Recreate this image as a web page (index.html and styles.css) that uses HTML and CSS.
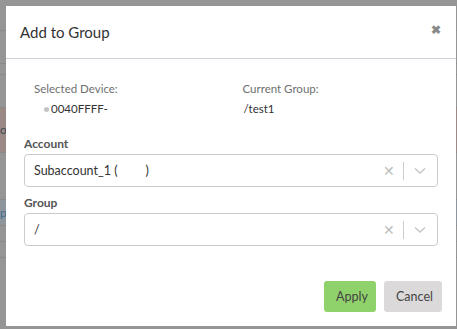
FILE: index.html
```html
<!DOCTYPE html>
<html lang="en">
<head>
    <meta charset="UTF-8">
    <meta name="viewport" content="width=device-width, initial-scale=1.0">
    <title>Add to Group</title>
    <link rel="stylesheet" href="styles.css">
</head>
<body>
    <div class="page">
        <div class="page-row r1"></div>
        <div class="page-row r2"></div>
        <div class="page-row r3"></div>
        <div class="page-row r4"></div>
        <div class="page-row r5 selected">o</div>
        <div class="page-row r6"></div>
        <div class="page-row r7 link">p</div>
        <div class="page-row r8"></div>
        <div class="page-row r9"></div>
    </div>

    <div class="modal">
        <div class="modal-header">
            <h1>Add to Group</h1>
            <span class="close">&#10006;</span>
        </div>

        <div class="modal-body">
            <div class="info">
                <div class="info-col">
                    <div class="info-label">Selected Device:</div>
                    <div class="info-value device"><span class="dot"></span>0040FFFF-</div>
                </div>
                <div class="info-col">
                    <div class="info-label">Current Group:</div>
                    <div class="info-value">/test1</div>
                </div>
            </div>

            <label class="field-label">Account</label>
            <div class="select">
                <span class="select-value">Subaccount_1 (<span class="redacted"></span>)</span>
                <span class="select-clear">&#10005;</span>
                <span class="select-sep"></span>
                <svg class="select-arrow" width="14" height="8" viewBox="0 0 14 8"><path d="M2 1.5 L7 6 L12 1.5" fill="none" stroke="#c8c8c8" stroke-width="1.6"/></svg>
            </div>

            <label class="field-label">Group</label>
            <div class="select">
                <span class="select-value">/</span>
                <span class="select-clear">&#10005;</span>
                <span class="select-sep"></span>
                <svg class="select-arrow" width="14" height="8" viewBox="0 0 14 8"><path d="M2 1.5 L7 6 L12 1.5" fill="none" stroke="#c8c8c8" stroke-width="1.6"/></svg>
            </div>
        </div>

        <div class="modal-footer">
            <button class="btn apply">Apply</button>
            <button class="btn cancel">Cancel</button>
        </div>
    </div>
</body>
</html>
```

FILE: styles.css
```css
body {
    margin: 0;
    background-color: #959595;
    font-family: 'Lato', 'Open Sans', sans-serif;
    overflow: hidden;
}
.page {
    height: 329px;
}
.page-row {
    border-bottom: 1px solid #8a8a8a;
    color: #3b4a5a;
    font-size: 12px;
    line-height: 20px;
}
.r1 { height: 30px; }
.r2 { height: 32px; }
.r3 { height: 10px; }
.r4 { height: 32px; }
.r5 { height: 44px; }
.r6 { height: 46px; }
.r7 { height: 25px; }
.r8 { height: 15px; }
.r9 { height: 15px; }
.selected {
    background-color: #9b8985;
    line-height: 44px;
}
.link {
    background-color: #8f969b;
    color: #3d6d94;
    line-height: 25px;
}

.modal {
    position: fixed;
    top: 6px;
    left: 6px;
    width: 450px;
    height: 320px;
    background-color: white;
    display: flex;
    flex-direction: column;
}
.modal-header {
    height: 52px;
    border-bottom: 1px solid #d0d0da;
    display: flex;
    align-items: center;
    justify-content: space-between;
    padding: 0 14px;
}
.modal-header h1 {
    margin: 0;
    font-size: 15px;
    font-weight: 400;
    color: #333;
}
.close {
    color: #8a8a8a;
    font-size: 12px;
    font-weight: bold;
    margin-top: -6px;
    margin-right: 1px;
}
.modal-body {
    padding: 20px 18px 0 18px;
}
.info {
    display: flex;
    padding-left: 10px;
    margin-bottom: 18px;
}
.info-col {
    width: 211px;
}
.info-col + .info-col {
    padding-left: 13px;
}
.info-label {
    color: #707070;
    font-size: 11.5px;
    line-height: 20px;
}
.info-value {
    color: #333;
    font-size: 11.5px;
    line-height: 18px;
    margin-top: 1px;
    padding-left: 1px;
}
.device {
    display: flex;
    align-items: center;
    padding-left: 10px;
}
.dot {
    width: 5px;
    height: 5px;
    border-radius: 50%;
    background-color: #c4c4c4;
    margin-right: 2px;
}
.field-label {
    display: block;
    color: #555;
    font-size: 12px;
    font-weight: bold;
    line-height: 16px;
    margin-bottom: 2px;
}
.select {
    height: 31px;
    border: 1px solid #ccc;
    border-radius: 4px;
    display: flex;
    align-items: center;
    margin-bottom: 8px;
}
.select-value {
    flex: 1;
    padding-left: 9px;
    font-size: 12.5px;
    color: #333;
}
.redacted {
    display: inline-block;
    width: 28px;
}
.select-clear {
    color: #bdbdbd;
    font-size: 14px;
    margin-right: 8px;
}
.select-sep {
    width: 1px;
    height: 18px;
    background-color: #ccc;
}
.select-arrow {
    margin: 1px 10px 0 9px;
}
.modal-footer {
    margin-top: auto;
    display: flex;
    justify-content: flex-end;
    gap: 8px;
    padding: 0 14px 14px 0;
}
.btn {
    height: 31px;
    border: none;
    border-radius: 3px;
    font-family: 'Lato', 'Open Sans', sans-serif;
    font-size: 12.5px;
    color: #444;
    padding: 0 12px;
}
.apply {
    background-color: #8fd16a;
    width: 52px;
}
.cancel {
    background-color: #dbd9da;
    width: 58px;
}
```
